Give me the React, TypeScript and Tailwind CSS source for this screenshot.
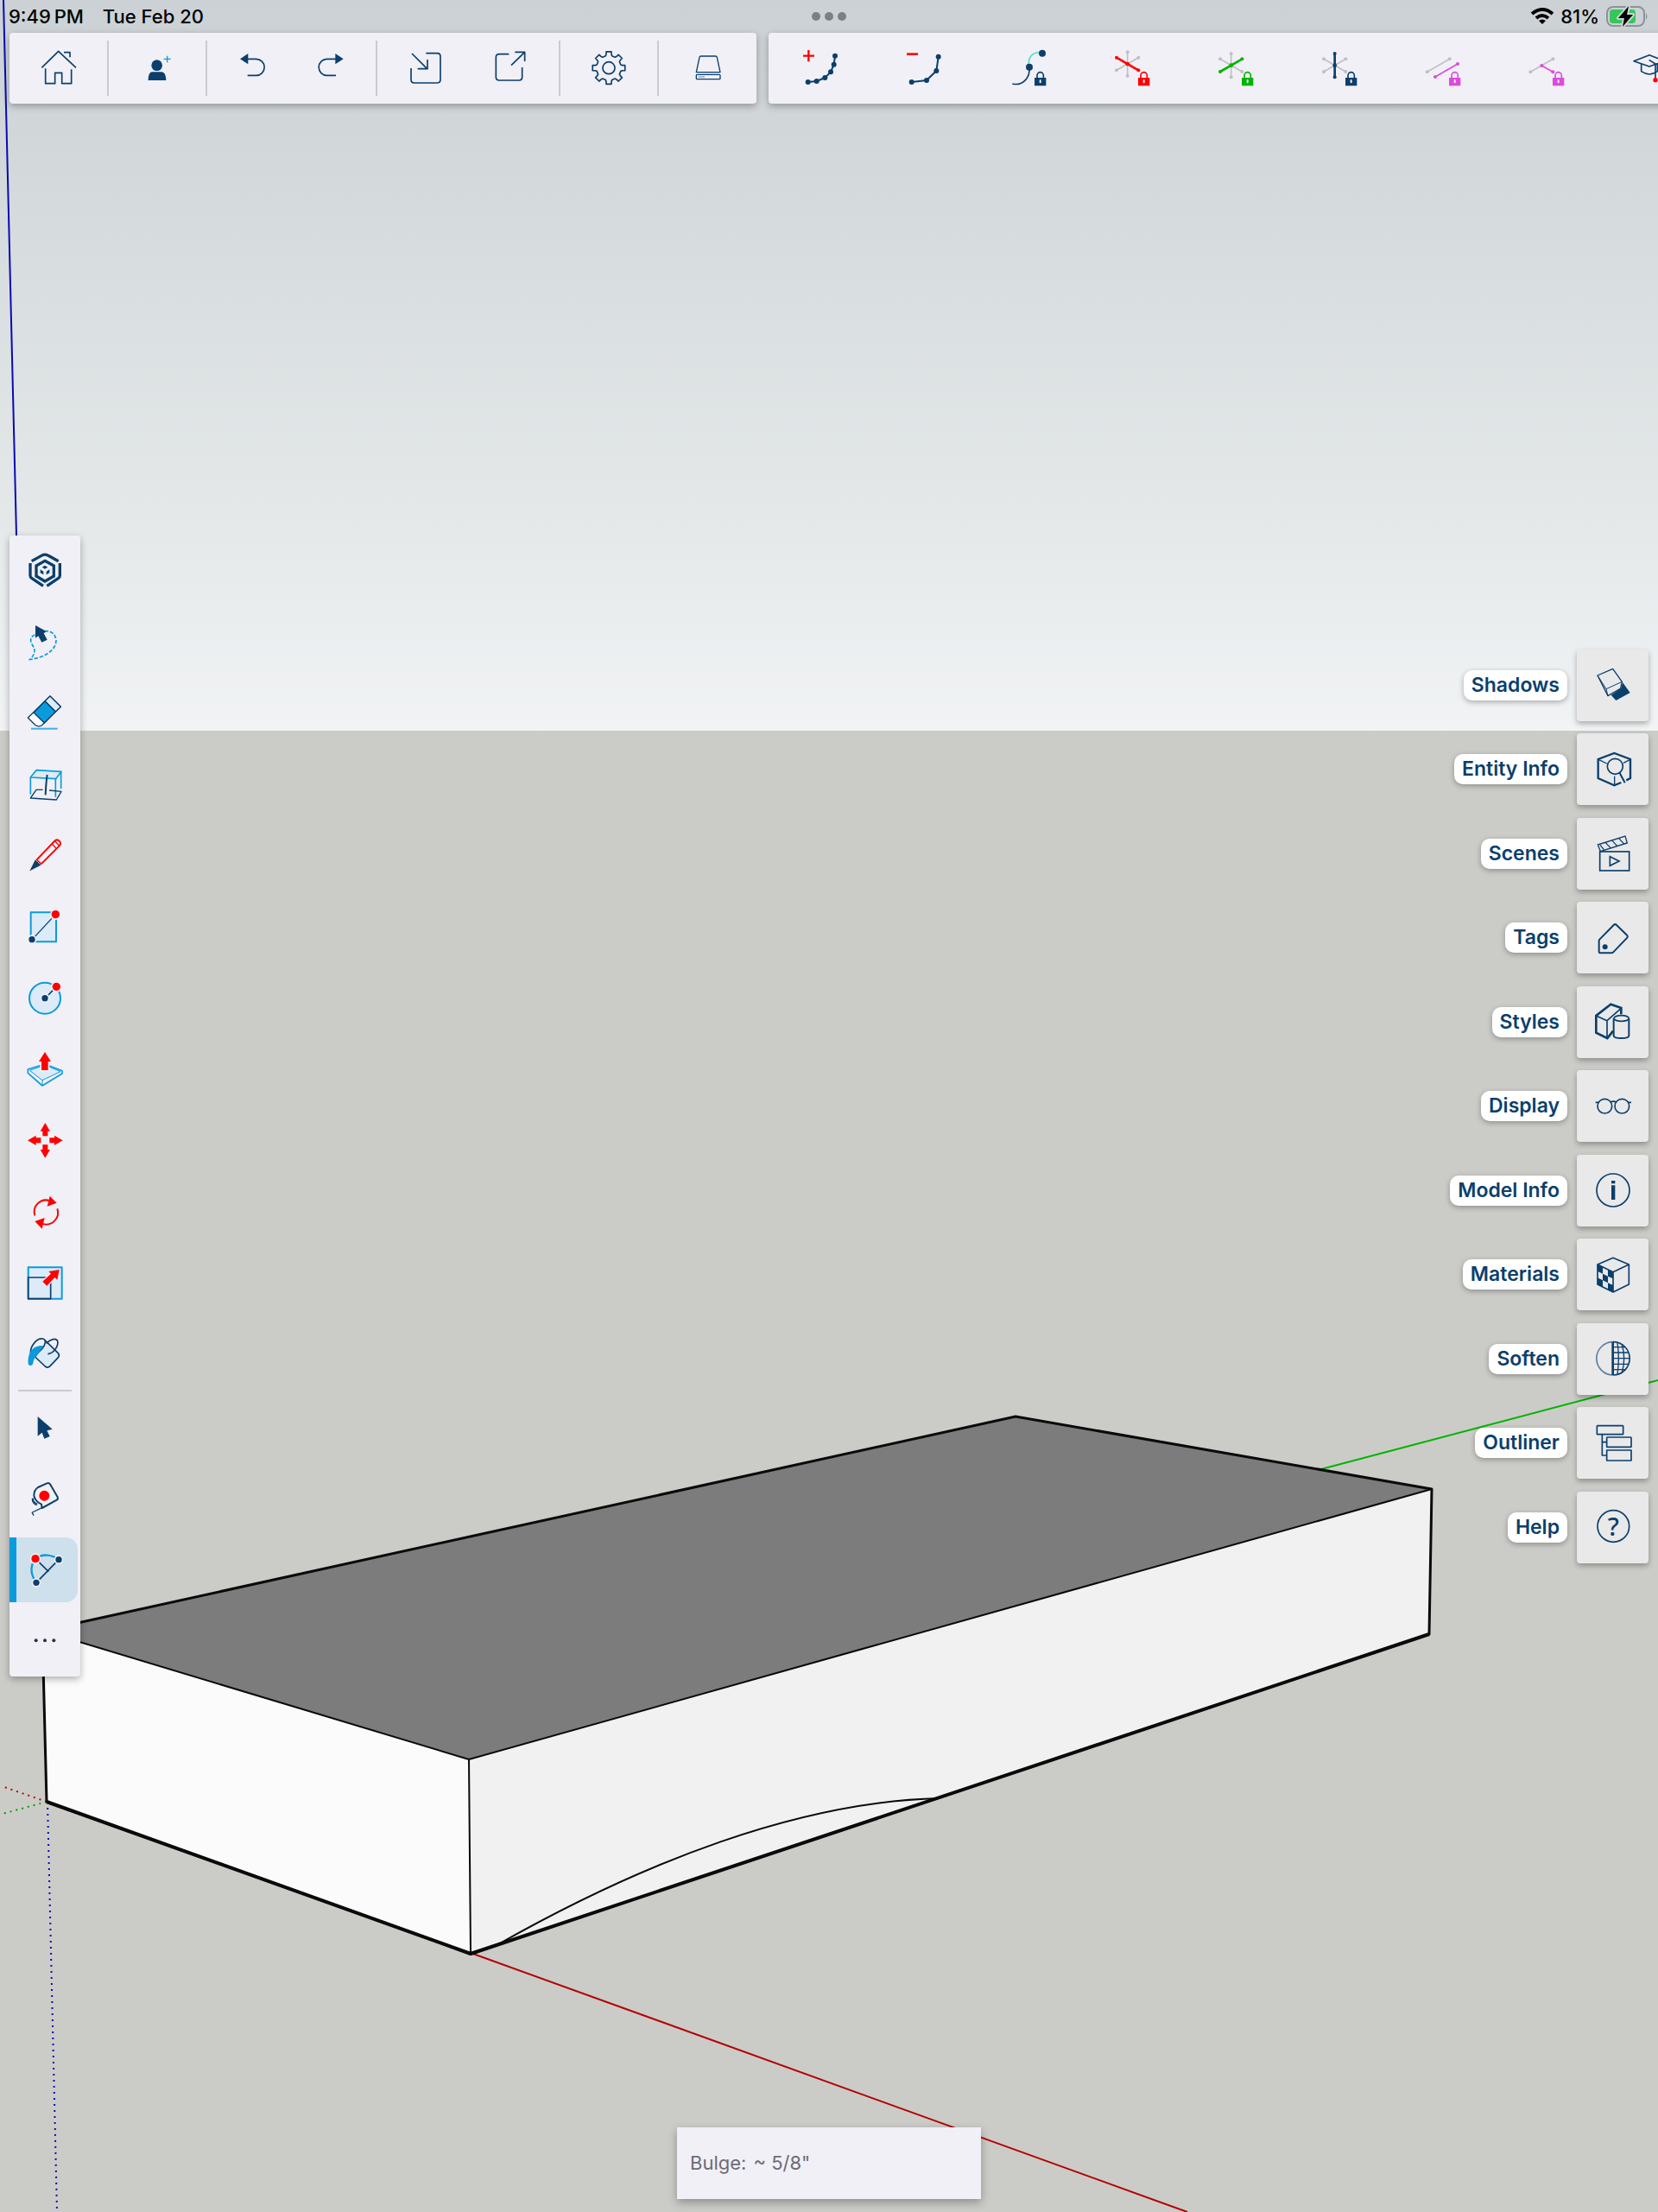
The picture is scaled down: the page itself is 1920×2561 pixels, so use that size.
import type { ReactNode } from "react"
import clsx from "clsx"

const NAVY = "#0b3f6c"
const BLUE = "#0a9bdc"
const PALE = "#dcebf8"
const RED = "#ff0000"
const GREY = "#bfbfc5"
const PANEL = "#f1f0f6"
const TILE = "#e9e9ea"

interface IconProps {
  x?: number
  y?: number
  children: ReactNode
}

// 48px icon drawn on a 144 unit grid
function Icon({ x = 0, y = 0, children }: IconProps) {
  return (
    <svg
      viewBox={`${x} ${y} 144 144`}
      className="size-12 shrink-0"
      fill="none"
      stroke={NAVY}
      strokeWidth={5}
      strokeLinejoin="round"
      aria-hidden="true"
    >
      {children}
    </svg>
  )
}

function Dot({ cx, cy, r = 11, fill = NAVY, ring = PANEL }: { cx: number; cy: number; r?: number; fill?: string; ring?: string }) {
  return (
    <g stroke="none">
      <circle cx={cx} cy={cy} r={r + 5} fill={ring} />
      <circle cx={cx} cy={cy} r={r} fill={fill} />
    </g>
  )
}

function Lock({ color }: { color: string }) {
  return (
    <g>
      <path d="M96 104h40v30H96z" fill={PANEL} stroke={PANEL} strokeWidth={6} />
      <path d="M105 108V97a11 11 0 0 1 22 0v11" stroke={color} strokeWidth={5} fill={PANEL} />
      <rect x={96} y={105} width={40} height={28} rx={1} fill={color} stroke="none" />
      <rect x={113} y={111} width={6} height={13} rx={3} fill={PANEL} stroke="none" />
    </g>
  )
}

function Segment({ from, to, color, width = 5 }: { from: number[]; to: number[]; color: string; width?: number }) {
  return (
    <g>
      <line x1={from[0]} y1={from[1]} x2={to[0]} y2={to[1]} stroke={color} strokeWidth={width} />
      <circle cx={from[0]} cy={from[1]} r={6} fill={color} stroke="none" />
      <circle cx={to[0]} cy={to[1]} r={6} fill={color} stroke="none" />
    </g>
  )
}

function AxisLock({ axis, color, cy = 62 }: { axis: "x" | "y" | "z"; color: string; cy?: number }) {
  const lines = {
    x: [[21, cy - 22], [97, cy + 22]],
    y: [[21, cy + 22], [97, cy - 22]],
    z: [[59, cy - 41], [59, cy + 41]],
  }
  return (
    <Icon>
      {(["x", "y", "z"] as const).filter(a => a !== axis).map(a => (
        <Segment key={a} from={lines[a][0]} to={lines[a][1]} color={GREY} />
      ))}
      <Segment from={lines[axis][0]} to={lines[axis][1]} color={color} width={8} />
      <circle cx={59} cy={cy} r={7} fill={color} stroke="none" />
      <Lock color={color} />
    </Icon>
  )
}

function Polyline({ points }: { points: number[][] }) {
  return (
    <g>
      <polyline points={points.join(" ")} strokeWidth={6} />
      {points.map(([cx, cy]) => (
        <circle key={cx} cx={cx} cy={cy} r={9} fill={NAVY} stroke="none" />
      ))}
    </g>
  )
}

function gearPath(cx: number, cy: number) {
  const pts: string[] = []
  for (let i = 0; i < 8; i++) {
    for (const [deg, r] of [[-15, 43], [-11, 48], [-9, 57], [9, 57], [11, 48], [15, 43]]) {
      const a = ((i * 45 + deg) * Math.PI) / 180
      pts.push(`${(cx + r * Math.cos(a)).toFixed(1)} ${(cy + r * Math.sin(a)).toFixed(1)}`)
    }
  }
  return `M${pts.join("L")}Z`
}

interface Tool {
  name: string
  icon: ReactNode
}

const fileGroups: { width: string; button: string; tools: Tool[] }[] = [
  {
    width: "w-[115px]",
    button: "w-[90px]",
    tools: [{
      name: "Home",
      icon: (
        <Icon x={129} y={165}>
          <path d="M142 235L200 178L261 235M219 182H240V199M155 238V290H188V253H212V290H245V241" />
        </Icon>
      ),
    }],
  },
  {
    width: "w-[114px]",
    button: "w-[90px]",
    tools: [{
      name: "Invite",
      icon: (
        <Icon x={474} y={165}>
          <circle cx={545} cy={227} r={19} fill={NAVY} stroke="none" />
          <path d="M515 279Q515 250 529 250H562Q576 251 577 279Z" fill={NAVY} stroke="none" />
          <path d="M581 194V217M569 205H593" stroke={BLUE} strokeWidth={4} />
        </Icon>
      ),
    }],
  },
  {
    width: "w-[197px]",
    button: "w-[91px]",
    tools: [
      {
        name: "Undo",
        icon: (
          <Icon x={801} y={165}>
            <path d="M831 205L859 186V223Z" fill={NAVY} stroke="none" />
            <path d="M857 205H887A28 28 0 0 1 887 262H857" />
          </Icon>
        ),
      },
      {
        name: "Redo",
        icon: (
          <Icon x={1074} y={165}>
            <path d="M1190 205L1162 186V223Z" fill={NAVY} stroke="none" />
            <path d="M1164 205H1133A28 28 0 0 0 1133 262H1164" />
          </Icon>
        ),
      },
    ],
  },
  {
    width: "w-[212px]",
    button: "w-[98px]",
    tools: [
      {
        name: "Import",
        icon: (
          <Icon x={206} y={165}>
            <path d="M279 185H318Q329 185 329 196V277Q329 288 318 288H238Q227 288 227 277V237M230 186L283 239M284 207V239H250" />
          </Icon>
        ),
      },
      {
        name: "Export",
        icon: (
          <Icon x={503} y={165}>
            <path d="M570 188H536Q525 188 525 199V268Q525 279 536 279H605Q616 279 616 268V234M578 227L625 181M591 181H625V213" />
          </Icon>
        ),
      },
    ],
  },
  {
    width: "w-[114px]",
    button: "w-[90px]",
    tools: [{
      name: "Settings",
      icon: (
        <Icon x={843} y={165}>
          <path d={gearPath(915, 236)} />
          <circle cx={915} cy={236} r={21} />
        </Icon>
      ),
    }],
  },
  {
    width: "w-[113px]",
    button: "w-[90px]",
    tools: [{
      name: "Storage",
      icon: (
        <Icon x={1186} y={165}>
          <g strokeWidth={4}>
            <path d="M1233 195H1284Q1288 195 1289 199L1300 251H1217L1228 199Q1229 195 1233 195Z" />
            <rect x={1217} y={259} width={83} height={16} rx={3} />
            <path d="M1224 267H1246" stroke="#a9bacd" strokeWidth={6} />
          </g>
        </Icon>
      ),
    }],
  },
]

const arcOptions: Tool[] = [
  {
    name: "Add segment",
    icon: (
      <Icon x={138} y={165}>
        <path d="M150 194H189M169 174V214" stroke={RED} strokeWidth={7} />
        <Polyline points={[[167, 285], [197, 282], [226, 270], [246, 250], [257, 224], [261, 194]]} />
      </Icon>
    ),
  },
  {
    name: "Remove segment",
    icon: (
      <Icon x={498} y={165}>
        <path d="M510 188H549" stroke={RED} strokeWidth={8} />
        <Polyline points={[[527, 285], [579, 279], [613, 246], [620, 197]]} />
      </Icon>
    ),
  },
  {
    name: "Lock tangent",
    icon: (
      <Icon>
        <path d="M77 68C71 34 88 13 123 18" stroke="#4be0c3" />
        <path d="M19 126C52 134 82 108 78 68" />
        <circle cx={78} cy={68} r={12} fill={NAVY} stroke="none" />
        <circle cx={123} cy={20} r={12} fill={NAVY} stroke="none" />
        <Lock color={NAVY} />
      </Icon>
    ),
  },
  { name: "Lock red axis", icon: <AxisLock axis="x" color={RED} cy={57} /> },
  { name: "Lock green axis", icon: <AxisLock axis="y" color="#00b400" /> },
  { name: "Lock blue axis", icon: <AxisLock axis="z" color={NAVY} /> },
  {
    name: "Lock parallel",
    icon: (
      <Icon>
        <Segment from={[20, 85]} to={[98, 40]} color={GREY} />
        <Segment from={[48, 102]} to={[126, 57]} color="#dc4bdc" />
        <Lock color="#dc4bdc" />
      </Icon>
    ),
  },
  {
    name: "Lock perpendicular",
    icon: (
      <Icon>
        <Segment from={[19, 85]} to={[97, 40]} color={GREY} />
        <Segment from={[58, 63]} to={[97, 85]} color="#dc4bdc" />
        <Lock color="#dc4bdc" />
      </Icon>
    ),
  },
  {
    name: "Learn",
    icon: (
      <Icon>
        <path d="M18 47L72 26L126 47L72 66ZM44 56V83Q58 92 72 93Q86 92 100 83V56" />
        <path d="M71 43L93 57V106" />
        <circle cx={93} cy={113} r={8} fill={RED} stroke="none" />
      </Icon>
    ),
  },
]

const drawTools: Tool[] = [
  {
    name: "Model",
    icon: (
      <Icon x={85} y={82}>
        <g strokeWidth={10} strokeLinejoin="miter">
          <path d="M111 120L145 101Q157 94 169 101L204 120M106 127V170Q106 176 111 179L151 206M209 127V170Q209 176 204 179L164 206" />
          <path d="M157 119L188 136V172L157 190L127 172V136Z" />
        </g>
        <path d="M147 141L157 135L167 141L157 147ZM141 149L152 156V167L141 161ZM173 149L162 156V167L173 161Z" fill={NAVY} stroke="none" />
      </Icon>
    ),
  },
  {
    name: "Lasso",
    icon: (
      <Icon x={85} y={329}>
        <path d="M101 460C150 455 196 430 196 393C194 372 180 360 158 361M122 374C106 380 104 396 114 410C125 427 123 440 108 456" stroke={BLUE} strokeDasharray="13 6" />
        <path d="M124 341V385L134 378L146 400L165 391L153 369L162 362Z" fill={NAVY} stroke="none" />
      </Icon>
    ),
  },
  {
    name: "Eraser",
    icon: (
      <Icon x={85} y={577}>
        <g strokeWidth={4}>
          <path d="M175 589L212 626L146 690Q135 698 123 689L98 664Z" fill="#fff" />
          <path d="M175 589L212 626L194 643L157 606Z" fill={PALE} />
          <path d="M157 606L194 643L155 682L118 646Z" fill={BLUE} />
        </g>
        <path d="M109 702H201" stroke="#3fb0e6" strokeWidth={6} />
      </Icon>
    ),
  },
  {
    name: "Section",
    icon: (
      <Icon x={85} y={824}>
        <path d="M127 844L214 849L195 874L107 869Z" fill={PALE} stroke={BLUE} />
        <path d="M107 870V928M194 874V937M213 850V908" stroke={BLUE} />
        <path d="M150 912L127 912L107 941L197 947L214 918L172 914" strokeWidth={4} />
        <path d="M165 860Q161 885 159 930" strokeWidth={6} />
      </Icon>
    ),
  },
  {
    name: "Line",
    icon: (
      <Icon x={85} y={82}>
        <path d="M128 168L190 103Q199 94 207 102Q215 110 207 119L144 182Z" fill={PANEL} stroke={RED} strokeWidth={6} />
        <path d="M182 112L197 129M192 103L207 119" stroke={RED} strokeWidth={4} />
        <path d="M102 208L123 166L145 186Z" fill={NAVY} stroke={PANEL} strokeWidth={2} />
      </Icon>
    ),
  },
  {
    name: "Rectangle",
    icon: (
      <Icon x={85} y={329}>
        <rect x={108} y={351} width={88} height={102} fill={PALE} stroke={BLUE} strokeWidth={6} />
        <path d="M113 445L194 358" strokeWidth={4} />
        <Dot cx={112} cy={445} />
        <Dot cx={194} cy={358} r={14} fill={RED} />
      </Icon>
    ),
  },
  {
    name: "Circle",
    icon: (
      <Icon x={85} y={577}>
        <circle cx={157} cy={648} r={54} fill={PALE} stroke={BLUE} strokeWidth={6} />
        <Dot cx={157} cy={648} />
        <path d="M169 637L190 615" strokeWidth={5} />
        <Dot cx={197} cy={608} r={14} fill={RED} />
      </Icon>
    ),
  },
  {
    name: "Push/Pull",
    icon: (
      <Icon x={85} y={824}>
        <g stroke={BLUE} strokeWidth={5}>
          <path d="M98 896L157 878L217 901V911L148 953L98 909Z" fill={PANEL} />
          <path d="M104 900L157 881L211 904L148 934Z" fill={PALE} strokeWidth={3} />
          <path d="M148 934V952" strokeWidth={3} />
        </g>
        <path d="M157 836L178 869H168V899H145V869H136Z" fill={RED} stroke={PANEL} strokeWidth={10} />
        <path d="M157 836L178 869H168V899H145V869H136Z" fill={RED} stroke="none" />
      </Icon>
    ),
  },
  {
    name: "Move",
    icon: (
      <Icon x={85} y={82}>
        {[0, 90, 180, 270].map(deg => (
          <path key={deg} transform={`rotate(${deg} 158 152)`} d="M158 91L175 120H167V137H149V120H141Z" fill={RED} stroke="none" />
        ))}
      </Icon>
    ),
  },
  {
    name: "Rotate",
    icon: (
      <Icon x={85} y={329}>
        <path d="M122 414A41 41 0 0 1 175 363M200 390A41 41 0 0 1 147 442" stroke={RED} strokeWidth={6} />
        <path d="M174 346L198 370L165 382ZM147 460L122 434L156 422Z" fill={RED} stroke="none" />
      </Icon>
    ),
  },
  {
    name: "Scale",
    icon: (
      <Icon x={85} y={577}>
        <rect x={99} y={593} width={117} height={109} fill={PALE} stroke={BLUE} strokeWidth={6} />
        <path d="M99 628H177V702H99Z" />
        <path d="M207 601L200 636L191 628L164 657L149 642L178 615L170 607Z" fill={RED} stroke={PALE} strokeWidth={8} />
        <path d="M207 601L200 636L191 628L164 657L149 642L178 615L170 607Z" fill={RED} stroke="none" />
      </Icon>
    ),
  },
  {
    name: "Paint",
    icon: (
      <Icon x={85} y={824}>
        <path d="M157 848L203 892Q209 898 204 906L175 938Q168 944 160 939L124 906L152 872Z" fill={PALE} stroke="none" />
        <path d="M107 892C106 866 130 838 150 842C164 846 158 865 146 878C134 890 126 898 123 905L158 938Q167 945 175 937L204 906Q209 899 203 892L157 847" />
        <path d="M162 858C176 843 196 838 201 850C205 868 188 892 167 895" />
        <path d="M151 866C112 864 97 892 99 929C102 938 115 937 116 926C118 906 134 900 151 866Z" fill={BLUE} stroke="none" />
      </Icon>
    ),
  },
]

const activeTools: (Tool & { active?: boolean })[] = [
  {
    name: "Select",
    icon: (
      <Icon>
        <path d="M47 36V104L62 92L70 113L89 105L79 85L98 80Z" fill={NAVY} stroke="none" />
      </Icon>
    ),
  },
  {
    name: "Tape measure",
    icon: (
      <Icon>
        <path d="M62 105L113 77Q119 73 116 67L90 22Q86 16 79 19L48 33Q34 42 34 62Q38 82 60 92Z" strokeWidth={6} />
        <path d="M28 120L62 104M27 119L33 131M31 70Q29 84 46 91M28 72Q28 89 44 95" strokeWidth={4} />
        <circle cx={70} cy={62} r={18} fill={RED} stroke="none" />
      </Icon>
    ),
  },
  {
    name: "2 point arc",
    active: true,
    icon: (
      <Icon>
        <path d="M39 118C15 85 20 55 36 35C60 18 90 18 117 38" stroke={BLUE} strokeWidth={7} />
        <path d="M39 118L117 38M36 35L82 80" />
        <Dot cx={36} cy={35} r={14} fill={RED} />
        <Dot cx={117} cy={38} />
        <Dot cx={39} cy={118} />
      </Icon>
    ),
  },
  {
    name: "More",
    icon: (
      <Icon>
        <g fill="#2a2f45" stroke="none">
          <circle cx={41} cy={70} r={6} />
          <circle cx={72} cy={70} r={6} />
          <circle cx={103} cy={70} r={6} />
        </g>
      </Icon>
    ),
  },
]

const panels: Tool[] = [
  {
    name: "Shadows",
    icon: (
      <Icon x={550} y={88}>
        <path d="M615 195L650 171L655 151L681 187L632 214Z" fill={NAVY} stroke="none" />
        <g strokeWidth={4}>
          <path d="M568 127L621 104L653 149L648 172L604 198Z" fill={TILE} />
          <path d="M598 174L653 149M568 127L598 174L604 198" strokeWidth={3} />
        </g>
      </Icon>
    ),
  },
  {
    name: "Entity Info",
    icon: (
      <Icon x={550} y={379}>
        <path d="M650 496L626 506L570 481V415L626 394L682 415V481L668 488" strokeWidth={7} strokeLinejoin="miter" />
        <path d="M573 417L600 430M680 417L658 428M627 474V503" strokeWidth={4} />
        <circle cx={629} cy={440} r={27} fill={TILE} />
        <path d="M645 463L663 497" strokeWidth={6} />
      </Icon>
    ),
  },
  {
    name: "Scenes",
    icon: (
      <Icon x={550} y={672}>
        <g strokeLinejoin="miter">
          <rect x={576} y={738} width={102} height={66} />
          <path d="M611 755L643 771L611 787Z" />
          <path d="M569 714L664 684L671 708L578 737ZM577 715L590 731M596 707L613 725M619 700L636 718M642 692L659 710" strokeWidth={4} />
        </g>
      </Icon>
    ),
  },
  {
    name: "Tags",
    icon: (
      <Icon x={550} y={964}>
        <path d="M624 991Q629 986 634 991L671 1027Q674 1031 671 1035L622 1086Q620 1088 617 1088H577Q573 1088 573 1084V1046Q573 1043 575 1041Z" strokeWidth={6} />
        <circle cx={594} cy={1067} r={9} fill={NAVY} stroke="none" />
      </Icon>
    ),
  },
  {
    name: "Styles",
    icon: (
      <Icon x={550} y={88}>
        <path d="M650 134V112L614 99L563 139V198L602 217L622 192" strokeWidth={8} strokeLinejoin="miter" />
        <path d="M563 139L601 156L650 113M601 156V214" />
        <path d="M624 149V208Q624 217 651 217Q677 217 677 208V149" fill={TILE} strokeWidth={6} />
        <ellipse cx={651} cy={148} rx={26} ry={10} fill={TILE} />
      </Icon>
    ),
  },
  {
    name: "Display",
    icon: (
      <Icon x={550} y={379}>
        <circle cx={593} cy={450} r={25} />
        <circle cx={653} cy={450} r={25} />
        <path d="M561 437H572M674 437H685M612 437Q623 430 634 437" />
      </Icon>
    ),
  },
  {
    name: "Model Info",
    icon: (
      <Icon x={550} y={672}>
        <circle cx={622} cy={744} r={57} />
        <path d="M616 711H629V721H616ZM616 727H629V777H616Z" fill={NAVY} stroke="none" />
      </Icon>
    ),
  },
  {
    name: "Materials",
    icon: (
      <Icon x={550} y={964}>
        <path d="M568 1000L586 1009V1032L568 1023ZM604 1018L622 1026V1049L604 1041ZM586 1032L604 1041V1064L586 1055ZM568 1046L586 1055V1078L568 1069ZM604 1064L622 1072V1096L604 1087Z" fill={NAVY} stroke="none" />
        <path d="M622 977L677 1000V1069L622 1096L568 1069V1000ZM568 1000L622 1026L677 1000M622 1026V1096" />
      </Icon>
    ),
  },
  {
    name: "Soften",
    icon: (
      <Icon x={550} y={117}>
        <path d="M622 131A57 57 0 0 0 622 246" stroke="#5f7f9e" />
        <path d="M622 131A57 57 0 0 1 622 246" />
        <path d="M621 131V246" strokeWidth={8} />
        <path d="M622 149H664M622 168H675M622 188H679M622 208H675M622 227H664M637 134Q645 188 637 243M653 141Q667 188 653 236" strokeWidth={4} />
      </Icon>
    ),
  },
  {
    name: "Outliner",
    icon: (
      <Icon x={550} y={409}>
        <rect x={566} y={420} width={91} height={30} rx={2} />
        <rect x={600} y={460} width={85} height={34} rx={2} />
        <rect x={600} y={505} width={85} height={36} />
        <path d="M584 450V523H600M584 477H600" />
      </Icon>
    ),
  },
  {
    name: "Help",
    icon: (
      <Icon x={550} y={702}>
        <circle cx={623} cy={771} r={55} />
        <text x={623} y={804} textAnchor="middle" fontSize={88} fontWeight={500} fill={NAVY} stroke="none" className="font-['Noto_Sans',sans-serif]">?</text>
      </Icon>
    ),
  },
]

function Scene() {
  return (
    <svg viewBox="0 0 1920 2561" preserveAspectRatio="xMidYMid slice" className="absolute inset-0 size-full" fill="none" aria-hidden="true">
      <defs>
        <linearGradient id="sky" x1="0" y1="0" x2="0" y2="1">
          <stop offset="0" stopColor="#cbd1d4" />
          <stop offset="0.73" stopColor="#e5e9ea" />
          <stop offset="1" stopColor="#f1f3f5" />
        </linearGradient>
      </defs>
      <rect width="1920" height="847" fill="url(#sky)" />
      <rect y="846" width="1920" height="1715" fill="#cbccc7" />

      {/* Axes */}
      <path d="M4 0L19 620" stroke="#0a0ab4" strokeWidth={2} />
      <path d="M1526 1702L1920 1598" stroke="#00b400" strokeWidth={2} />
      <path d="M545 2261L1375 2561" stroke="#b40000" strokeWidth={2} />
      <g strokeWidth={2} strokeDasharray="2 5">
        <path d="M54 2086L5 2069" stroke="#b40000" />
        <path d="M54 2086L3 2100" stroke="#00a000" />
        <path d="M55 2086L66 2561" stroke="#0a0ab4" />
      </g>

      {/* Solid */}
      <path d="M49 1888L1176 1640L1658 1724L543 2037Z" fill="#7c7c7c" />
      <path d="M49 1888L543 2037L545 2262L54 2086Z" fill="#fbfbfb" />
      <path d="M543 2037L1658 1724L1655 1892L545 2262Z" fill="#f1f1f1" />
      <g stroke="#0a0a0a" strokeLinejoin="round">
        <path d="M49 1888L1176 1640L1658 1724L1655 1892L545 2262L54 2086Z" strokeWidth={3} />
        <path d="M54 2086L545 2262L1655 1892" strokeWidth={4} />
        <path d="M49 1888L543 2037L1658 1724M543 2037L545 2262" strokeWidth={2} />
        <path d="M577 2251C745 2156 925 2086 1088 2082" strokeWidth={2} />
      </g>
    </svg>
  )
}

function StatusBar() {
  return (
    <div className="grid h-[38px] grid-cols-3 items-center px-[10px] text-[22px] leading-7 font-medium text-black">
      <div className="flex gap-[22px]">
        <span>9:49{"\u2009"}PM</span>
        <span>Tue Feb 20</span>
      </div>
      <div className="flex justify-center gap-[5px]">
        {[0, 1, 2].map(i => (
          <span key={i} className="size-[10px] rounded-full bg-[#7a8183]" />
        ))}
      </div>
      <div className="flex items-center justify-end gap-2">
        <svg viewBox="0 0 26 20" className="w-[26px] h-5" fill="none" stroke="#000" strokeWidth={4} aria-label="Wi-Fi">
          <path d="M1 7Q13 -3 25 7" />
          <path d="M6 12Q13 6 20 12" />
          <path d="M13 19L9 15Q13 12 17 15Z" fill="#000" stroke="none" />
        </svg>
        <span>81%</span>
        <svg viewBox="0 0 50 26" className="w-[50px] h-[26px]" fill="none" aria-label="Battery charging">
          <rect x={1} y={2} width={43} height={22} rx={7} stroke="#8c9295" strokeWidth={2} />
          <rect x={4} y={5} width={30} height={16} rx={4} fill="#34c759" />
          <path d="M46 9Q49 13 46 17Z" fill="#8c9295" />
          <path d="M26 1L14 15H21L19 25L31 11H24Z" fill="#000" stroke="#ccd2d5" strokeWidth={4} strokeLinejoin="round" paintOrder="stroke" />
        </svg>
      </div>
    </div>
  )
}

function ToolButton({ tool, className }: { tool: Tool; className?: string }) {
  return (
    <button type="button" aria-label={tool.name} className={clsx("flex items-center justify-center", className)}>
      {tool.icon}
    </button>
  )
}

export default function App() {
  return (
    <main className="relative flex min-h-screen flex-col overflow-hidden bg-[#cbccc7] font-['Inter',sans-serif] text-[#0b3f6c]">
      <Scene />

      <div className="relative flex flex-1 flex-col">
        <StatusBar />

        {/* Top toolbars */}
        <div className="flex gap-[14px] overflow-x-clip pl-[11px]">
          <nav className="flex h-[82px] shrink-0 items-center rounded bg-[#f1f0f6] shadow-[0_3px_8px_rgba(0,0,0,0.3)]">
            {fileGroups.map((group, idx) => (
              <div
                key={idx}
                className={clsx("flex h-16 items-center justify-center", group.width, idx < fileGroups.length - 1 && "border-r-2 border-[#cacacf]")}
              >
                {group.tools.map(tool => (
                  <ToolButton key={tool.name} tool={tool} className={clsx("shrink-0", group.button)} />
                ))}
              </div>
            ))}
          </nav>
          <nav className="flex h-[82px] shrink-0 items-center rounded bg-[#f1f0f6] shadow-[0_3px_8px_rgba(0,0,0,0.3)]">
            {arcOptions.map(tool => (
              <ToolButton key={tool.name} tool={tool} className="w-[120px]" />
            ))}
          </nav>
        </div>

        <div className="flex flex-1 items-center justify-between px-[11px]">
          {/* Drawing tools */}
          <nav className="flex h-[1321px] w-[82px] flex-col rounded bg-[#f1f0f6] shadow-[0_3px_8px_rgba(0,0,0,0.3)]">
            {drawTools.map(tool => (
              <ToolButton key={tool.name} tool={tool} className="flex-1" />
            ))}
            <hr className="mx-[10px] border-t-2 border-[#cacacf]" />
            {activeTools.map(tool => (
              <div key={tool.name} className="flex flex-1 items-center">
                <ToolButton
                  tool={tool}
                  className={clsx(
                    "h-[75px]",
                    tool.active ? "w-[79px] rounded-r-[14px] border-l-8 border-[#0a9bdc] bg-[#cee0ec] pr-1" : "w-full",
                  )}
                />
              </div>
            ))}
          </nav>

          {/* Panels */}
          <nav className="flex h-[1058px] flex-col justify-between">
            {panels.map(panel => (
              <button key={panel.name} type="button" className="flex items-center justify-end gap-[11px]">
                <span className="rounded-[10px] bg-white px-[9px] text-[23px] leading-[35px] font-semibold shadow-[0_2px_6px_rgba(0,0,0,0.3)]">
                  {panel.name}
                </span>
                <span className="flex size-[83px] items-center justify-center rounded bg-[#e9e9ea] shadow-[0_3px_6px_rgba(0,0,0,0.3)]">
                  {panel.icon}
                </span>
              </button>
            ))}
          </nav>
        </div>

        {/* Measurements */}
        <div className="flex justify-center pt-[22px] pb-[15px]">
          <div className="flex h-[83px] w-[352px] items-center gap-2 bg-[#f1f0f6] px-[15px] text-[22px] text-[#6c6b78] shadow-[0_4px_10px_rgba(0,0,0,0.3)]">
            <label htmlFor="bulge">Bulge:</label>
            <input id="bulge" defaultValue={'~ 5/8"'} className="min-w-0 flex-1 bg-transparent outline-none" />
          </div>
        </div>
      </div>
    </main>
  )
}
